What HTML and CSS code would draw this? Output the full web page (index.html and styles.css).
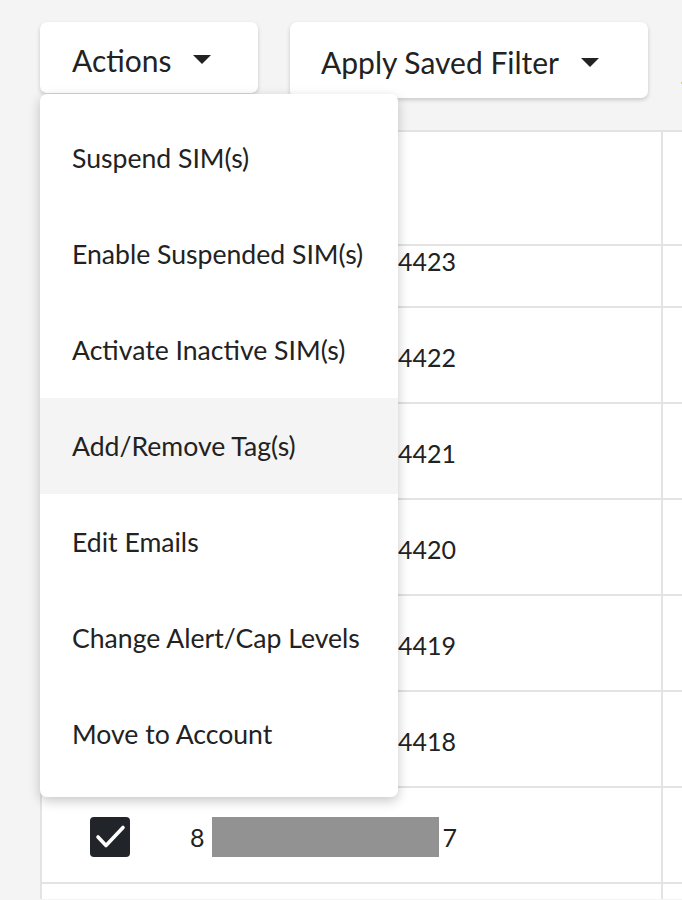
FILE: index.html
```html
<!DOCTYPE html>
<html lang="en">
<head>
    <meta charset="UTF-8">
    <meta name="viewport" content="width=device-width, initial-scale=1.0">
    <title>SIMs</title>
    <link rel="stylesheet" href="styles.css">
</head>
<body>
    <div class="toolbar">
        <div class="actions-wrap">
            <button class="btn btn-actions"><span>Actions</span>
                <svg class="caret" width="18" height="9" viewBox="0 0 18 9"><polygon points="0,0 18,0 9,9" fill="#222"/></svg>
            </button>
            <ul class="menu">
                <li>Suspend SIM(s)</li>
                <li>Enable Suspended SIM(s)</li>
                <li>Activate Inactive SIM(s)</li>
                <li class="active">Add/Remove Tag(s)</li>
                <li>Edit Emails</li>
                <li>Change Alert/Cap Levels</li>
                <li>Move to Account</li>
            </ul>
        </div>
        <button class="btn btn-filter"><span>Apply Saved Filter</span>
            <svg class="caret" width="18" height="9" viewBox="0 0 18 9"><polygon points="0,0 18,0 9,9" fill="#222"/></svg>
        </button>
        <span class="more">-</span>
    </div>

    <div class="table">
        <div class="row header"><div class="cell"></div><div class="cell"></div></div>
        <div class="row partial">
            <div class="cell"><span class="check"></span><span class="iccid"><span class="redact short"></span>4423</span></div>
            <div class="cell"></div>
        </div>
        <div class="row">
            <div class="cell"><span class="check"></span><span class="iccid"><span class="redact short"></span>4422</span></div>
            <div class="cell"></div>
        </div>
        <div class="row">
            <div class="cell"><span class="check"></span><span class="iccid"><span class="redact short"></span>4421</span></div>
            <div class="cell"></div>
        </div>
        <div class="row">
            <div class="cell"><span class="check"></span><span class="iccid"><span class="redact short"></span>4420</span></div>
            <div class="cell"></div>
        </div>
        <div class="row">
            <div class="cell"><span class="check"></span><span class="iccid"><span class="redact short"></span>4419</span></div>
            <div class="cell"></div>
        </div>
        <div class="row">
            <div class="cell"><span class="check"></span><span class="iccid"><span class="redact short"></span>4418</span></div>
            <div class="cell"></div>
        </div>
        <div class="row">
            <div class="cell">
                <span class="check checked">
                    <svg width="40" height="40" viewBox="0 0 40 40"><polyline points="8,20 16,28.5 33,10.5" fill="none" stroke="#fff" stroke-width="3.6" stroke-linecap="round" stroke-linejoin="round"/></svg>
                </span>
                <span class="iccid">8<span class="redact"></span>7</span>
            </div>
            <div class="cell"></div>
        </div>
        <div class="row last">
            <div class="cell"></div>
            <div class="cell"></div>
        </div>
    </div>
</body>
</html>
```

FILE: styles.css
```css
body {
    margin: 0;
    background-color: #f4f4f4;
    font-family: Lato, "Open Sans", sans-serif;
    color: #222;
    overflow: hidden;
    height: 900px;
}
.toolbar {
    display: flex;
    align-items: flex-start;
    gap: 32px;
    padding: 22px 0 0 40px;
    height: 130px;
    box-sizing: border-box;
    white-space: nowrap;
}
.actions-wrap {
    position: relative;
    z-index: 2;
    flex-shrink: 0;
}
.btn {
    display: flex;
    align-items: center;
    flex-shrink: 0;
    box-sizing: border-box;
    background: white;
    border: none;
    border-radius: 7px;
    box-shadow: 0 2px 4px rgba(0,0,0,0.18);
    font-family: inherit;
    font-size: 30px;
    color: #222;
    cursor: pointer;
}
.btn span {
    padding-top: 4px;
}
.btn-actions {
    height: 71px;
    width: 218px;
    padding: 0 0 0 32px;
}
.btn-filter {
    height: 76px;
    width: 358px;
    padding: 0 0 0 31px;
}
.caret {
    margin-left: 22px;
    margin-top: 3px;
}
.btn-filter .caret {
    margin-left: 22px;
    margin-top: 5px;
}
.more {
    flex-shrink: 0;
    font-size: 28px;
    margin-top: 42px;
    color: #444;
}
.menu {
    position: absolute;
    top: 72px;
    left: 0;
    width: 358px;
    margin: 0;
    padding: 16px 0 15px;
    list-style: none;
    background: white;
    border-radius: 7px;
    box-shadow: 0 4px 12px rgba(0,0,0,0.22);
}
.menu li {
    height: 96px;
    display: flex;
    align-items: center;
    padding-left: 32px;
    font-size: 26.6px;
}
.menu li.active {
    background-color: #f4f4f4;
}
.table {
    margin-left: 40px;
    background: white;
    border-left: 2px solid #e3e3e3;
}
.row {
    display: grid;
    grid-template-columns: 621px 1fr;
    height: 96px;
    border-top: 2px solid #e3e3e3;
    box-sizing: border-box;
}
.row.header {
    height: 114px;
}
.row.partial {
    height: 62px;
}
.row.last {
    height: 17px;
}
.cell {
    display: flex;
    align-items: center;
    border-right: 2px solid #e3e3e3;
    padding: 4px 0 0 48px;
    font-size: 25px;
}
.cell:last-child {
    border-right: none;
}
.row.partial .cell {
    align-items: flex-start;
    padding-top: 0;
}
.row.partial .iccid {
    margin-top: 1px;
}
.check {
    width: 40px;
    height: 40px;
    box-sizing: border-box;
    border: 2px solid #888;
    border-radius: 4px;
    margin-right: 60px;
    display: flex;
    align-items: center;
    justify-content: center;
    flex-shrink: 0;
}
.check.checked {
    background: #212428;
    border: none;
}
.iccid {
    display: flex;
    align-items: center;
    line-height: 28px;
}
.redact {
    display: inline-block;
    width: 227px;
    height: 40px;
    background: #929292;
    margin: 0 4px 0 7px;
}
.redact.short {
    width: 200px;
    height: 28px;
    margin: 0 8px 0 0;
}
```
